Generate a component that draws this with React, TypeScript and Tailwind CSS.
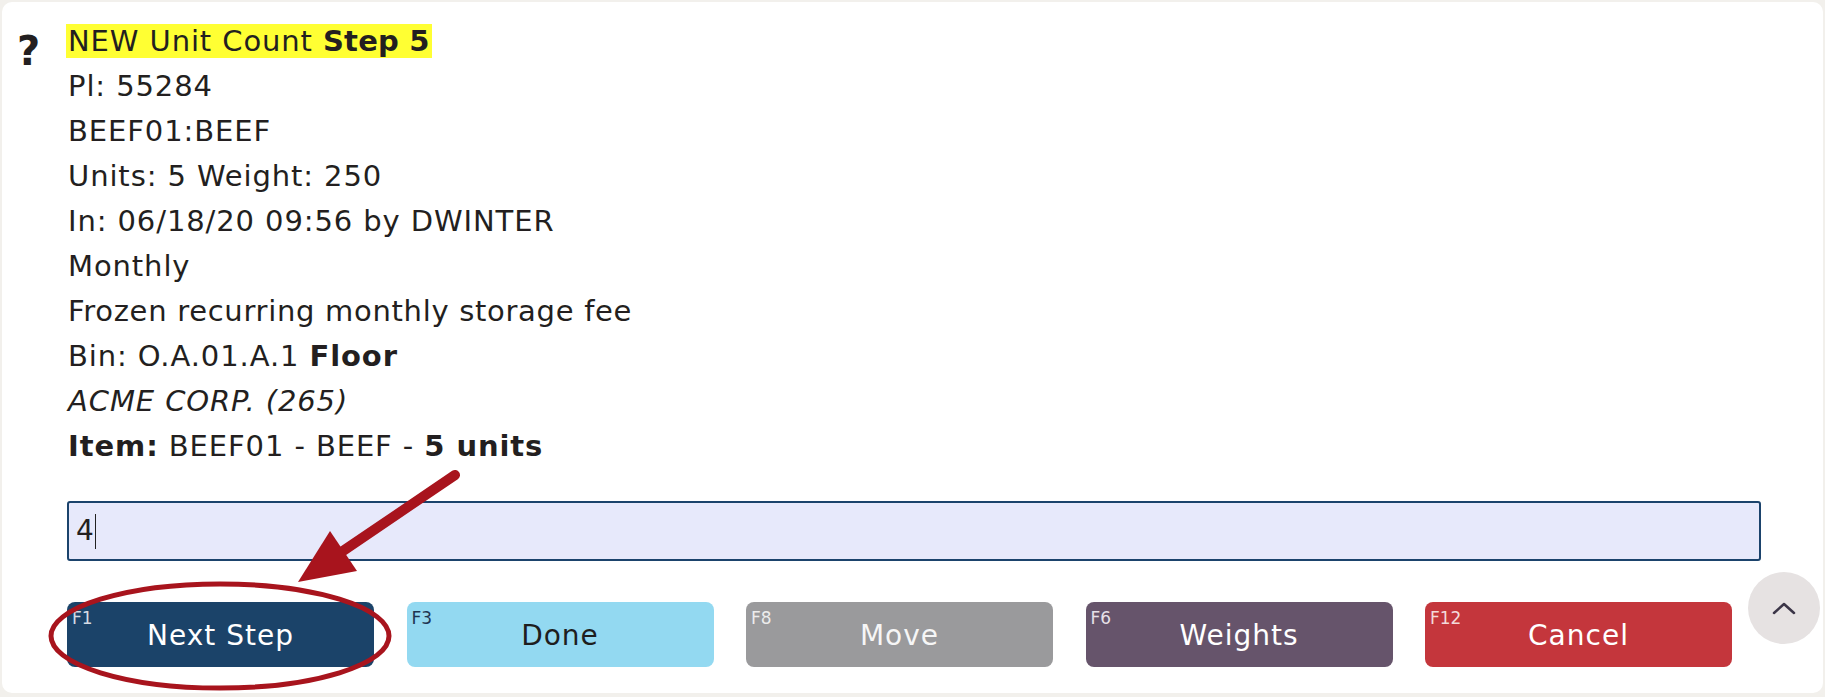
import React from 'react';

const buttons = [
  { key: 'F1', label: 'Next Step', cls: 'bg-[#1b4369] text-white', keyCls: 'text-[#d5dbe4]' },
  { key: 'F3', label: 'Done', cls: 'bg-[#93d9f1] text-[#1e1e1e]', keyCls: 'text-[#1f3552]' },
  { key: 'F8', label: 'Move', cls: 'bg-[#9a9a9c] text-[#f6f6f6]', keyCls: 'text-[#ececec]' },
  { key: 'F6', label: 'Weights', cls: 'bg-[#66546b] text-white', keyCls: 'text-[#e6e0e8]' },
  { key: 'F12', label: 'Cancel', cls: 'bg-[#c4363c] text-white', keyCls: 'text-[#f3dada]' },
];

function Annotation() {
  // red call-out drawn over the first button
  return (
    <svg className="pointer-events-none absolute left-0 top-0" width="1825" height="697" viewBox="0 0 1825 697">
      <ellipse cx="220" cy="636" rx="169" ry="52" fill="none" stroke="#a8141d" strokeWidth="5" />
      <line x1="455" y1="475" x2="340" y2="553" stroke="#a8141d" strokeWidth="10" strokeLinecap="round" />
      <polygon points="298,582 357,571 330,531" fill="#a8141d" />
    </svg>
  );
}

export default function App() {
  return (
    <div
      className="relative min-h-screen bg-[#f2f0ec] p-[2px] text-[#231f20]"
      style={{ fontFamily: '"DejaVu Sans", Verdana, sans-serif' }}
    >
      <div className="relative h-[691px] rounded-[10px] bg-white pl-[15px] pr-[62px] pt-[17px]">
        <div className="flex">
          <div className="w-[49px] pt-[10px] text-[40px] leading-[45px] font-bold">?</div>
          <div className="flex-1">
            <div className="text-[29px] leading-[45px] tracking-[0.9px]">
              <div>
                <span className="bg-[#ffff33] px-[2px]">
                  NEW Unit Count <b className="tracking-[0.2px]">Step 5</b>
                </span>
              </div>
              <div className="pl-[2px]">Pl: 55284</div>
              <div className="pl-[2px]">BEEF01:BEEF</div>
              <div className="pl-[2px]">Units: 5 Weight: 250</div>
              <div className="pl-[2px]">In: 06/18/20 09:56 by DWINTER</div>
              <div className="pl-[2px]">Monthly</div>
              <div className="pl-[2px] tracking-[0.7px]">Frozen recurring monthly storage fee</div>
              <div className="pl-[2px]">
                Bin: O.A.01.A.1 <b>Floor</b>
              </div>
              <div className="pl-[2px] italic">ACME CORP. (265)</div>
              <div className="pl-[2px]">
                <b>Item:</b> BEEF01 - BEEF - <b>5 units</b>
              </div>
            </div>

            <div className="ml-[1px] mt-[32px] flex h-[60px] items-center rounded-[3px] border-2 border-[#1b436c] bg-[#e7e9fb] pl-[7px] text-[28px]">
              <span>4</span>
              <span className="ml-[1px] h-[35px] w-[1px] bg-[#222]" />
            </div>

            <div className="ml-[1px] mt-[41px] flex gap-[32.5px]">
              {buttons.map(b => (
                <div
                  key={b.key}
                  className={`relative flex h-[65px] w-[307px] items-center justify-center rounded-[8px] text-[28px] tracking-[1px] ${b.cls}`}
                >
                  <span className={`absolute left-[5px] top-[6px] text-[17px] leading-[20px] tracking-normal ${b.keyCls}`}>
                    {b.key}
                  </span>
                  <span className="pt-[2px]">{b.label}</span>
                </div>
              ))}
            </div>
          </div>
        </div>

        <div className="absolute left-[1746px] top-[570px] flex h-[72px] w-[72px] items-center justify-center rounded-full bg-[#e6e2e2]">
          <svg width="24" height="14" viewBox="0 0 24 14" fill="none">
            <path d="M2 12 L12 3 L22 12" stroke="#3b3547" strokeWidth="2.5" strokeLinecap="round" strokeLinejoin="round" />
          </svg>
        </div>
      </div>
      <Annotation />
    </div>
  );
}
